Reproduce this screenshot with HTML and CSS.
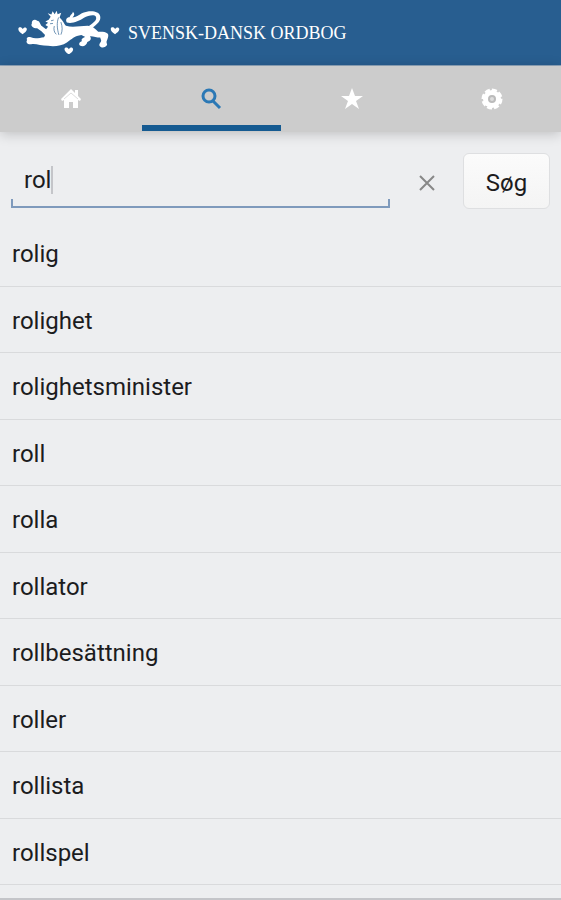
FILE: index.html
```html
<!DOCTYPE html>
<html lang="da">
<head>
    <meta charset="UTF-8">
    <meta name="viewport" content="width=device-width, initial-scale=1.0">
    <title>Svensk-Dansk Ordbog</title>
    <link rel="stylesheet" href="styles.css">
</head>
<body>
    <header class="topbar">
        <svg class="logo" viewBox="54 24 309 138" aria-hidden="true">
            <g fill="#fff">
                <!-- tail -->
                <path d="M202 67 C197 59 201 51 210 51 C217 39 220 41 220 35 C227 41 225 47 219 52 C230 52 237 45 251 38 C269 30 300 31 303 48 C306 62 294 72 278 84 L269 78 C284 67 294 60 290 50 C286 42 266 46 254 53 C239 63 217 72 202 67 Z"/>
                <!-- body and legs -->
                <path d="M153 50 L144 39 L155 43 L159 33 L165 42 L171 32 L174 42 L185 38 L180 52 C190 61 194 72 199 77 C220 84 242 77 265 77 C277 77 286 84 297 95 C307 95 319 94 326 101 C330 107 325 117 322 126 L324 135 C319 144 307 145 302 139 C297 133 306 128 306 122 L303 113 C292 113 281 108 272 109 C278 118 273 123 264 126 C262 135 253 142 243 138 C236 133 240 126 248 123 C244 119 250 113 258 111 L246 105 C226 107 216 118 202 128 C187 139 163 140 145 138 C124 138 107 130 94 133 C83 135 76 126 82 120 C77 115 85 108 93 112 C105 118 119 114 133 112 L136 105 L125 94 L112 85 C100 85 91 77 96 70 C94 61 105 55 112 62 C120 63 120 70 124 76 L139 88 L145 80 L137 75 L145 68 L137 64 L147 59 Z"/>
                <!-- hearts -->
                <path id="heart" d="M68 103 C61 98 54 93 55 86 C56 81 65 80 68 87 C72 80 80 81 81 87 C81 94 74 98 68 103 Z"/>
                <use href="#heart" x="280"/>
                <use href="#heart" x="140" y="61"/>
            </g>
            <g fill="none" stroke="#285e90" stroke-width="2">
                <path d="M154 62 L162 60 M151 71 L160 70 M164 78 C161 88 164 98 170 103 M177 52 C171 66 172 86 178 105 M184 66 C189 80 189 93 184 104"/>
            </g>
        </svg>
        <span class="title">SVENSK-DANSK ORDBOG</span>
    </header>

    <nav class="tabs">
        <a href="#hjem" class="tab" aria-label="Hjem">
            <svg viewBox="0 0 22 22"><path fill="#fff" d="M11 1 L15 5 V2 H18 V8 L21 11 L20 13 L18 12 V20 H13 V14 H9 V20 H4 V12 L2 13 L1 11 Z"/><path stroke="#ddd" fill="none" d="M4 11 L11 5 L18 11"/></svg>
        </a>
        <a href="#soeg" class="tab active" aria-label="Søg">
            <svg viewBox="0 0 22 22"><g fill="none" stroke="#2b78b5" stroke-width="3"><circle cx="9" cy="8" r="6"/><path d="M13 13 L20 20"/></g></svg>
        </a>
        <a href="#favoritter" class="tab" aria-label="Favoritter">
            <svg viewBox="0 0 22 22"><path fill="#fff" d="M11 0 L14 8 H22 L15 13 L18 21 L11 16 L4 21 L7 13 L0 8 H8 Z"/></svg>
        </a>
        <a href="#indstillinger" class="tab" aria-label="Indstillinger">
            <svg viewBox="0 0 22 22"><circle cx="11" cy="11" r="9" fill="#fff"/><circle cx="11" cy="11" r="9" fill="none" stroke="#fff" stroke-width="3" stroke-dasharray="5 2"/><circle cx="11" cy="11" r="3" fill="#ddd" stroke="#bbb" stroke-width="2"/></svg>
        </a>
    </nav>

    <main>
        <form class="search">
            <div class="field">
                <input type="text" id="searchText" class="searchText" value="rol" size="3" aria-label="Søgeord" autocomplete="off">
                <span class="caret"></span>
            </div>
            <button type="reset" class="clearBtn" aria-label="Ryd">
                <svg viewBox="0 0 16 16"><path d="M1 1 L15 15 M15 1 L1 15" stroke="#888" stroke-width="2"/></svg>
            </button>
            <button type="submit" class="searchBtn">Søg</button>
        </form>

        <ul class="words">
            <li><a href="#rolig">rolig</a></li>
            <li><a href="#rolighet">rolighet</a></li>
            <li><a href="#rolighetsminister">rolighetsminister</a></li>
            <li><a href="#roll">roll</a></li>
            <li><a href="#rolla">rolla</a></li>
            <li><a href="#rollator">rollator</a></li>
            <li><a href="#rollbesattning">rollbesättning</a></li>
            <li><a href="#roller">roller</a></li>
            <li><a href="#rollista">rollista</a></li>
            <li><a href="#rollspel">rollspel</a></li>
        </ul>
    </main>
</body>
</html>
```
FILE: styles.css
```css
* {
  box-sizing: border-box;
}
body {
  margin: 0;
  background-color: #edeef0;
  color: #1c1c1e;
  font-family: Roboto, "Liberation Sans", sans-serif;
  font-size: 24px;
}
main {
  padding-bottom: 13px;
  border-bottom: 2px solid #c4c5c9;
}
.topbar {
  display: flex;
  align-items: center;
  gap: 8px;
  height: 66px;
  padding: 0 18px 4px;
  background-color: #285e90;
  border-bottom: 1px solid #8fa5bb;
}
.logo {
  width: 102px;
  height: 46px;
}
.title {
  color: #fff;
  font-family: "Liberation Serif", serif;
  font-size: 18px;
  line-height: 24px;
  padding-top: 4px;
}
.tabs {
  display: flex;
  gap: 2px;
  height: 66px;
  padding: 0 0 1px 2px;
  background-color: #ccc;
  box-shadow: 0 2px 12px rgba(0, 0, 0, 0.2);
}
.tab {
  display: flex;
  flex: 1;
  align-items: center;
  justify-content: center;
  border-top: 6px solid transparent;
  border-bottom: 6px solid transparent;
}
.tab svg {
  width: 22px;
  height: 22px;
}
.tab.active {
  border-bottom-color: #155a91;
}
.search {
  display: flex;
  align-items: center;
  height: 88px;
  padding: 10px 11px 0;
}
.field {
  position: relative;
  flex: 1;
  height: 54px;
}
/* bracket shaped underline */
.field::after {
  content: "";
  position: absolute;
  left: 0;
  right: 0;
  bottom: 0;
  height: 7px;
  border: 2px solid #7f9abc;
  border-top: none;
  pointer-events: none;
}
.searchText {
  width: 100%;
  height: 52px;
  padding: 0 13px;
  border: none;
  outline: none;
  background: transparent;
  color: inherit;
  caret-color: transparent;
  font: inherit;
}
.caret {
  position: absolute;
  top: 12px;
  left: 40px;
  width: 2px;
  height: 28px;
  background-color: #c4c5c9;
}
.clearBtn {
  display: flex;
  align-items: center;
  justify-content: center;
  width: 73px;
  height: 56px;
  padding: 4px 0 0;
  border: none;
  background: transparent;
}
.clearBtn svg {
  width: 16px;
  height: 16px;
}
.searchBtn {
  width: 87px;
  height: 56px;
  padding: 4px 0 0;
  border: 1px solid #dedfe1;
  border-radius: 6px;
  background: linear-gradient(#fbfbfb, #f4f4f4);
  color: inherit;
  font: inherit;
}
.words {
  margin: 0;
  padding: 0;
  list-style: none;
}
.words a {
  display: flex;
  align-items: center;
  height: 67px;
  padding: 2px 12px 0;
  border-bottom: 1px solid #d9dadc;
  color: inherit;
  text-decoration: none;
}
.words li:nth-child(even) a {
  height: 66px;
}
```
